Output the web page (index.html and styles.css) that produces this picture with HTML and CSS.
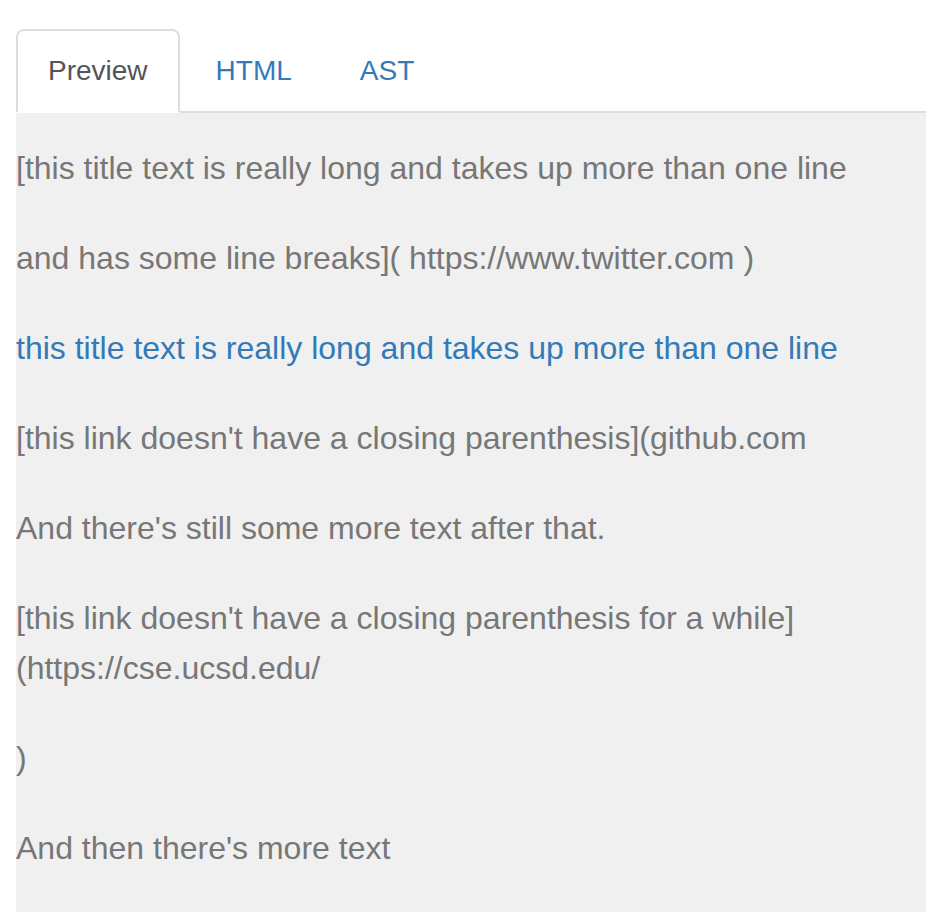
FILE: index.html
```html
<!DOCTYPE html>
<html>
<head>
<meta charset="utf-8">
<link rel="stylesheet" href="styles.css">
</head>
<body>
<div class="wrap">
  <ul class="tabs">
    <li class="tab active"><a>Preview</a></li>
    <li class="tab"><a>HTML</a></li>
    <li class="tab"><a>AST</a></li>
  </ul>
  <div class="preview">
    <p>[this title text is really long and takes up more than one line</p>
    <p>and has some line breaks]( https://www.twitter.com )</p>
    <p><a class="link">this title text is really long and takes up more than one line</a></p>
    <p>[this link doesn't have a closing parenthesis](github.com</p>
    <p>And there's still some more text after that.</p>
    <p>[this link doesn't have a closing parenthesis for a while](https://cse.ucsd.edu/</p>
    <p>)</p>
    <p>And then there's more text</p>
  </div>
</div>
</body>
</html>
```

FILE: styles.css
```css
html, body {
  margin: 0;
  padding: 0;
  background: #fff;
}
body {
  font-family: "Liberation Sans", Arial, Helvetica, sans-serif;
  font-size: 28px;
  line-height: 40px;
}
.wrap {
  padding: 29px 2px 0 16px;
}
.tabs {
  list-style: none;
  margin: 0;
  padding: 0;
  display: flex;
  border-bottom: 2px solid #ddd;
}
.tab {
  margin-right: 4px;
  margin-bottom: -2px;
}
.tab a {
  display: block;
  padding: 20px 30px;
  border: 2px solid transparent;
  border-radius: 8px 8px 0 0;
  color: #337ab7;
}
.tab.active a {
  color: #555;
  background: #fff;
  border-color: #ddd;
  border-bottom-color: transparent;
}
.preview {
  background: #f0f0f0;
  padding: 30px 0 1px 0;
  color: #777;
  font-size: 32px;
  line-height: 50px;
}
.preview p {
  margin: 0 0 40px 0;
}
.preview p:last-child {
  margin-bottom: 38px;
}
.link {
  color: #337ab7;
}
```
